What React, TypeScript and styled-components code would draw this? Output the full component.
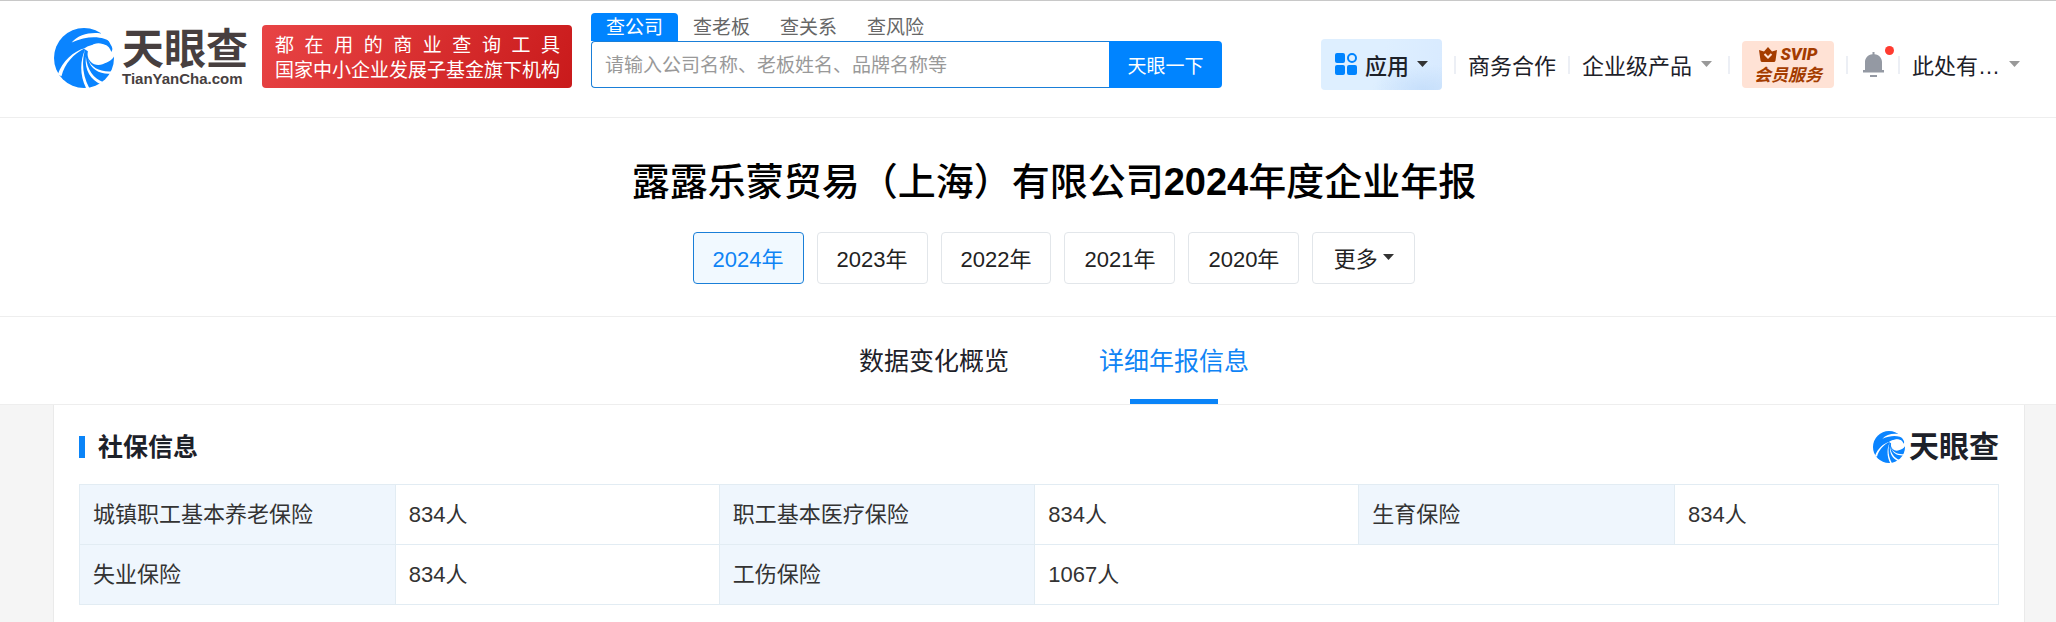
import React from "react";
import styled, { createGlobalStyle, css } from "styled-components";

const GlobalStyle = createGlobalStyle`
  *, *::before, *::after { box-sizing: border-box; }
  body {
    margin: 0;
    background: #f5f5f5;
    color: #1d2129;
    font-family: "Liberation Sans", "Noto Sans CJK SC", sans-serif;
    font-size: 22px;
  }
  button, input { font-family: inherit; }
  button { cursor: pointer; }
  a { color: inherit; text-decoration: none; }
`;

const Page = styled.div`
  display: flex;
  flex-direction: column;
  min-height: 100vh;
`;

const Header = styled.header`
  display: flex;
  align-items: flex-end;
  padding: 12px 36px 29px 54px;
  background: #fff;
  border-top: 1px solid #c8c8c8;
  border-bottom: 1px solid #eee;
`;

const BrandLink = styled.a`
  display: flex;
  align-items: center;
  gap: 8px;
  color: #473f3f;
`;

const BrandText = styled.span`
  display: flex;
  flex-direction: column;
  font-weight: 700;
`;

const BrandName = styled.span<{ $small?: boolean }>`
  font-size: ${(p) => (p.$small ? 30 : 42)}px;
  line-height: ${(p) => (p.$small ? 32 : 40)}px;
  font-weight: 700;
  white-space: nowrap;
`;

const BrandDomain = styled.span`
  font-size: 15px;
  line-height: 17px;
`;

const Slogan = styled.p`
  width: 310px;
  flex: none;
  margin: 0 19px 0 14px;
  padding: 8px 12px 5px 13px;
  border-radius: 4px;
  background: linear-gradient(120deg, #e84445, #c91a1b);
  color: #fff;
  font-size: 19px;
  line-height: 25px;
  white-space: nowrap;
`;

const SloganLine = styled.span`
  display: block;
  text-align: justify;
  text-align-last: justify;
`;

const Search = styled.form`
  flex: 0 1 631px;
  min-width: 480px;
`;

const SearchTabs = styled.div`
  display: flex;
`;

const SearchTab = styled.button<{ $active?: boolean }>`
  height: 28px;
  padding: 2px 15px 0;
  border: 0;
  border-radius: 4px 4px 0 0;
  background: ${(p) => (p.$active ? "#0084ff" : "transparent")};
  color: ${(p) => (p.$active ? "#fff" : "#666")};
  font-size: 19px;
  line-height: 26px;
`;

const SearchRow = styled.div`
  display: flex;
  height: 47px;
`;

const SearchInput = styled.input`
  flex: 1;
  min-width: 0;
  padding: 2px 13px 0;
  border: 1px solid #1a7fd8;
  border-right: 0;
  border-radius: 4px 0 0 4px;
  outline: 0;
  background: #fff;
  font-size: 19px;
  &::placeholder { color: #999; opacity: 1; }
`;

const SearchButton = styled.button`
  width: 113px;
  padding: 0;
  border: 0;
  border-radius: 0 4px 4px 0;
  background: #0084ff;
  color: #fff;
  font-size: 19px;
`;

const Nav = styled.nav`
  display: flex;
  align-items: center;
  height: 47px;
  margin-left: auto;
  white-space: nowrap;
`;

const AppsButton = styled.button`
  display: flex;
  align-items: center;
  gap: 8px;
  height: 51px;
  padding: 0 14px 2px;
  border: 0;
  border-radius: 4px;
  background:
    radial-gradient(ellipse at 85% 100%, #c6dffb 0, transparent 36%),
    linear-gradient(100deg, #deefff 50%, #d8eaff);
  color: #1d2129;
  font-size: 22px;
  font-weight: 500;
`;

const NavLink = styled.a<{ $menu?: boolean }>`
  display: flex;
  align-items: center;
  gap: 9px;
  padding-bottom: 2px;
  padding-right: ${(p) => (p.$menu ? 4 : 0)}px;
  color: #1d2129;
`;

const Divider = styled.span`
  width: 2px;
  height: 18px;
  margin: 0 12px;
  background: #eceff5;
`;

const VipLink = styled.a`
  display: flex;
  flex-direction: column;
  align-items: center;
  justify-content: center;
  width: 92px;
  height: 47px;
  border-radius: 4px;
  background: #ffe2d5;
  color: #a43c00;
  font-size: 17px;
  line-height: 21px;
  font-style: italic;
  font-weight: 700;
`;

const VipTop = styled.span`
  display: flex;
  align-items: center;
  gap: 4px;
  font-family: Roboto, sans-serif;
  font-weight: 900;
`;

const BellButton = styled.button`
  position: relative;
  display: flex;
  margin: 0 2px 0 3px;
  padding: 0;
  border: 0;
  background: none;
`;

const Dot = styled.span`
  position: absolute;
  top: -6px;
  right: -10px;
  width: 9px;
  height: 9px;
  border-radius: 50%;
  background: #ff3b30;
`;

const TitleSection = styled.section`
  display: flex;
  flex-direction: column;
  align-items: center;
  padding: 36px 0 32px 52px;
  background: #fff;
  border-bottom: 1px solid #eee;
`;

const PageTitle = styled.h1`
  margin: 0 0 22px;
  color: #000;
  font-size: 38px;
  line-height: 56px;
  font-weight: 500;
`;

const TitleYear = styled.span`
  font-weight: 700;
`;

const YearList = styled.div`
  display: flex;
  gap: 13px;
`;

const YearButton = styled.button<{ $active?: boolean }>`
  display: flex;
  align-items: center;
  justify-content: center;
  gap: 5px;
  min-width: 103px;
  height: 52px;
  padding: 0 19px 2px;
  border: 1px solid #e2e6ea;
  border-radius: 4px;
  background: #fff;
  color: #222;
  font-size: 22px;
  ${(p) =>
    p.$active &&
    css`
      border-color: #1a7fd8;
      background: #f1f9ff;
      color: #0f84f5;
    `}
`;

const SectionTabs = styled.nav`
  display: flex;
  justify-content: center;
  gap: 90px;
  padding-left: 52px;
  background: #fff;
  border-bottom: 1px solid #eee;
`;

const SectionTab = styled.a<{ $active?: boolean }>`
  display: flex;
  flex-direction: column;
  align-items: center;
  padding-top: 25px;
  color: ${(p) => (p.$active ? "#0f84f5" : "#1d2129")};
  font-size: 25px;
  line-height: 38px;
  &::after {
    content: "";
    width: 88px;
    height: 5px;
    margin-top: 19px;
    background: ${(p) => (p.$active ? "#0a84f8" : "transparent")};
  }
`;

const Card = styled.main`
  flex: 1;
  margin: 0 31px 0 53px;
  padding: 22px 25px 18px 25px;
  background: #fff;
  border: 1px solid #eaeaea;
  border-width: 0 1px;
`;

const CardHeader = styled.div`
  display: flex;
  align-items: center;
  justify-content: space-between;
  margin-bottom: 17px;
`;

const CardTitle = styled.h2`
  display: flex;
  align-items: center;
  gap: 13px;
  margin: 0;
  font-size: 25px;
  line-height: 40px;
  font-weight: 700;
  &::before {
    content: "";
    width: 6px;
    height: 22px;
    background: #0a84f8;
  }
`;

const CardBrand = styled.span`
  display: flex;
  align-items: center;
  gap: 4px;
  color: #1d2129;
`;

const Table = styled.table`
  width: 100%;
  table-layout: fixed;
  border-collapse: collapse;
  color: #333;
  font-size: 22px;
  line-height: 32px;
`;

const LabelCol = styled.col`
  width: 16.45%;
`;

const cell = css`
  padding: 14px 13px 13px;
  border: 1px solid #e2ecf3;
  text-align: left;
  font-weight: 400;
`;

const LabelCell = styled.th`
  ${cell}
  background: #eff6fd;
`;

const ValueCell = styled.td`
  ${cell}
`;

const Swirl = ({ size }: { size: number }) => (
  <svg width={size} height={size} viewBox="12 27 177 177" aria-hidden="true">
    <circle cx="100.5" cy="115.5" r="88.5" fill="#0a84ff" />
    <g fill="#fff">
      <path d="M64 70 C84 47 116 39 150 43 L156 34 L200 30 L200 76 L182 72 C160 50 112 48 64 70Z" />
      <path d="M100 88 C118 76 140 72 160 76 C172 79 178 88 181 98 C184 92 187 86 187 78 L202 78 L202 106 L189 111 C182 124 164 134 143 132 C138 128 134 124 131 122 C124 104 114 96 100 88Z" />
      <circle cx="143" cy="104" r="32" />
      <path d="M104 86 C68 104 44 132 34 169 L23 164 C38 124 68 96 104 86Z" />
      <path d="M104 90 C93 126 96 168 116 204 L107 205 C88 168 88 126 104 90Z" />
      <path d="M106 112 C110 150 128 176 158 187 L151 194 C120 180 102 152 106 112Z" />
      <path d="M112 118 C122 144 146 157 182 155 L178 162 C148 164 120 150 112 118Z" />
    </g>
  </svg>
);

const Caret = ({ color = "#999" }: { color?: string }) => (
  <svg width="11" height="6" viewBox="0 0 11 6" aria-hidden="true">
    <path d="M0 0h11L5.500 6z" fill={color} />
  </svg>
);

const AppsIcon = () => (
  <svg width="22" height="22" viewBox="0 0 22 22" aria-hidden="true">
    <g fill="#0084ff">
      <rect width="10" height="10" rx="2" />
      <rect y="12" width="10" height="10" rx="2" />
      <rect x="12" y="12" width="10" height="10" rx="2" />
    </g>
    <circle cx="17" cy="5" r="4" fill="none" stroke="#0084ff" strokeWidth="2" />
  </svg>
);

const Crown = () => (
  <svg width="18" height="15" viewBox="0 0 18 15" aria-hidden="true">
    <path
      d="M0 3l5 1.500L9 0l4 4.500L18 3l-1.500 10.500q-.2 1.500-1.700 1.500H3.200q-1.500 0-1.700-1.500z"
      fill="#a43c00"
    />
    <path d="M5.500 7L9 10.500 12.500 7" fill="none" stroke="#ffe2d5" strokeWidth="2" />
  </svg>
);

const Bell = () => (
  <svg width="21" height="25" viewBox="0 0 21 25" aria-hidden="true">
    <path
      d="M9.500 0h2v2.300C16 2.800 19 6 19 10v8h2v2.500H0V18h2v-8c0-4 3-7.200 7.500-7.700zM7 23h7v2H7z"
      fill="#9499a3"
    />
  </svg>
);

const searchTabs = ["查公司", "查老板", "查关系", "查风险"];
const years = ["2024年", "2023年", "2022年", "2021年", "2020年"];

export default function App() {
  return (
    <Page>
      <GlobalStyle />
      <Header>
        <BrandLink href="#">
          <Swirl size={60} />
          <BrandText>
            <BrandName>天眼查</BrandName>
            <BrandDomain>TianYanCha.com</BrandDomain>
          </BrandText>
        </BrandLink>
        <Slogan>
          <SloganLine>都 在 用 的 商 业 查 询 工 具</SloganLine>
          <SloganLine>国家中小企业发展子基金旗下机构</SloganLine>
        </Slogan>
        <Search onSubmit={(e) => e.preventDefault()}>
          <SearchTabs>
            {searchTabs.map((tab, i) => (
              <SearchTab key={tab} type="button" $active={i === 0}>
                {tab}
              </SearchTab>
            ))}
          </SearchTabs>
          <SearchRow>
            <SearchInput
              type="text"
              aria-label="搜索"
              placeholder="请输入公司名称、老板姓名、品牌名称等"
            />
            <SearchButton type="submit">天眼一下</SearchButton>
          </SearchRow>
        </Search>
        <Nav>
          <AppsButton type="button">
            <AppsIcon />
            应用
            <Caret color="#333" />
          </AppsButton>
          <Divider />
          <NavLink href="#">商务合作</NavLink>
          <Divider />
          <NavLink href="#" $menu>
            企业级产品
            <Caret />
          </NavLink>
          <Divider />
          <VipLink href="#">
            <VipTop>
              <Crown />
              SVIP
            </VipTop>
            <span>会员服务</span>
          </VipLink>
          <Divider />
          <BellButton type="button" aria-label="消息">
            <Bell />
            <Dot />
          </BellButton>
          <Divider />
          <NavLink href="#">
            此处有…
            <Caret />
          </NavLink>
        </Nav>
      </Header>

      <TitleSection>
        <PageTitle>
          露露乐蒙贸易（上海）有限公司<TitleYear>2024</TitleYear>年度企业年报
        </PageTitle>
        <YearList>
          {years.map((year, i) => (
            <YearButton key={year} type="button" $active={i === 0}>
              {year}
            </YearButton>
          ))}
          <YearButton type="button">
            更多
            <Caret color="#333" />
          </YearButton>
        </YearList>
      </TitleSection>

      <SectionTabs>
        <SectionTab href="#overview">数据变化概览</SectionTab>
        <SectionTab href="#detail" $active>
          详细年报信息
        </SectionTab>
      </SectionTabs>

      <Card>
        <CardHeader>
          <CardTitle>社保信息</CardTitle>
          <CardBrand>
            <Swirl size={32} />
            <BrandName $small>天眼查</BrandName>
          </CardBrand>
        </CardHeader>
        <Table>
          <colgroup>
            <LabelCol />
            <col />
            <LabelCol />
            <col />
            <LabelCol />
            <col />
          </colgroup>
          <tbody>
            <tr>
              <LabelCell scope="row">城镇职工基本养老保险</LabelCell>
              <ValueCell>834人</ValueCell>
              <LabelCell scope="row">职工基本医疗保险</LabelCell>
              <ValueCell>834人</ValueCell>
              <LabelCell scope="row">生育保险</LabelCell>
              <ValueCell>834人</ValueCell>
            </tr>
            <tr>
              <LabelCell scope="row">失业保险</LabelCell>
              <ValueCell>834人</ValueCell>
              <LabelCell scope="row">工伤保险</LabelCell>
              <ValueCell colSpan={3}>1067人</ValueCell>
            </tr>
          </tbody>
        </Table>
      </Card>
    </Page>
  );
}
